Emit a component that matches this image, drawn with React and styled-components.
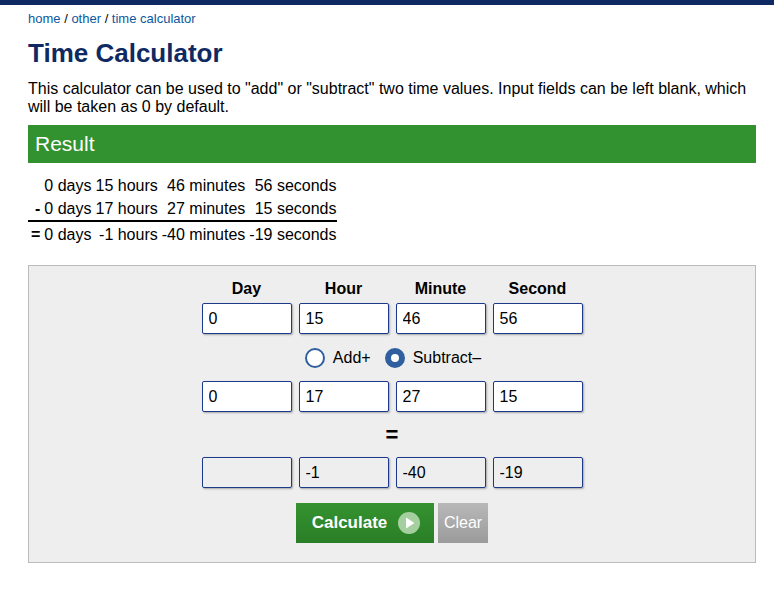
import React from "react";
import styled, { createGlobalStyle } from "styled-components";

const Global = createGlobalStyle`
  html, body { margin: 0; padding: 0; background: #fff; }
  body { font-family: "Liberation Sans", Arial, sans-serif; color: #000; }
`;

const TopBar = styled.div`
  height: 5px;
  background: #0f2a62;
`;

const Page = styled.div`
  padding: 0 18px 0 28px;
`;

const Crumbs = styled.div`
  font-size: 13px;
  line-height: 16px;
  padding-top: 6px;
  color: #000;
  a { color: #0a58a0; text-decoration: none; }
`;

const Title = styled.h1`
  margin: 0;
  padding-top: 11px;
  font-size: 26px;
  line-height: 30px;
  font-weight: bold;
  color: #0f2a62;
`;

const Intro = styled.p`
  margin: 0;
  padding-top: 12px;
  font-size: 16px;
  line-height: 18px;
`;

const ResultBar = styled.div`
  margin-top: 9px;
  height: 38px;
  background: #32922f;
  color: #fff;
  font-size: 21px;
  line-height: 38px;
  padding-left: 7px;
`;

const ResultTable = styled.table`
  margin-top: 12px;
  border-collapse: collapse;
  font-size: 16px;
  td {
    text-align: right;
    padding: 0 0 0 4px;
    white-space: nowrap;
  }
`;

const Row = styled.tr`
  height: ${(p) => p.$h}px;
  td {
    border-bottom: ${(p) => (p.$line ? "2px solid #000" : "none")};
    vertical-align: middle;
  }
`;

const Sign = styled.td`
  font-weight: bold;
  && { padding-left: 3px; }
`;

const Panel = styled.div`
  margin-top: 18px;
  width: 726px;
  background: #eeeeee;
  border: 1px solid #bbbbbb;
  display: flex;
  flex-direction: column;
  align-items: center;
  padding: 12px 0 19px;
`;

const Grid = styled.div`
  display: grid;
  grid-template-columns: repeat(4, 90px);
  column-gap: 7px;
`;

const Head = styled.div`
  font-weight: bold;
  font-size: 16px;
  text-align: center;
  line-height: 22px;
  padding-bottom: 3px;
`;

const Field = styled.input`
  box-sizing: border-box;
  width: 90px;
  height: 31px;
  border: 1px solid #1d3a8a;
  border-radius: 2px;
  box-shadow: 1px 1px 2px rgba(0, 0, 0, 0.3);
  background: ${(p) => (p.readOnly ? "#eeeeee" : "#fff")};
  font-family: "Liberation Sans", Arial, sans-serif;
  font-size: 16px;
  padding: 0 0 0 6px;
  color: #000;
  outline: none;
`;

const Radios = styled.div`
  display: flex;
  align-items: center;
  height: 24px;
  margin: 12px 0 11px 16px;
  font-size: 16px;
`;

const RadioItem = styled.label`
  display: flex;
  align-items: center;
  margin-right: 14px;
`;

const Dot = styled.span`
  box-sizing: border-box;
  width: 20px;
  height: 20px;
  border-radius: 50%;
  border: ${(p) => (p.$on ? "6px solid #2f5f9e" : "2px solid #2f5f9e")};
  background: #fff;
  margin-right: 8px;
`;

const Equals = styled.div`
  font-weight: bold;
  font-size: 22px;
  line-height: 24px;
  height: 44px;
  padding-top: 1px;
  display: flex;
  align-items: center;
  justify-content: center;
`;

const Buttons = styled.div`
  display: flex;
  gap: 4px;
  margin-top: 15px;
`;

const CalcButton = styled.button`
  height: 40px;
  width: 138px;
  border: none;
  background: linear-gradient(#35922f, #2a7e27);
  color: #fff;
  font-family: "Liberation Sans", Arial, sans-serif;
  font-weight: bold;
  font-size: 17px;
  display: flex;
  align-items: center;
  justify-content: center;
  gap: 11px;
  padding: 0 0 0 2px;
`;

const ClearButton = styled.button`
  height: 40px;
  width: 50px;
  border: none;
  background: linear-gradient(#b8b8b8, #9b9b9b);
  color: #fff;
  font-family: "Liberation Sans", Arial, sans-serif;
  font-size: 16px;
  padding: 0;
`;

const PlayIcon = () => (
  <svg width="22" height="22" viewBox="0 0 22 22">
    <circle cx="11" cy="11" r="11" fill="#a6cf9f" />
    <path d="M8 5.5 L16.5 11 L8 16.5 Z" fill="#fff" />
  </svg>
);

export default function App() {
  const top = ["0", "15", "46", "56"];
  const mid = ["0", "17", "27", "15"];
  const res = ["", "-1", "-40", "-19"];
  return (
    <>
      <Global />
      <TopBar />
      <Page>
        <Crumbs>
          <a href="#">home</a> / <a href="#">other</a> / <a href="#">time calculator</a>
        </Crumbs>
        <Title>Time Calculator</Title>
        <Intro>
          This calculator can be used to "add" or "subtract" two time values. Input fields can be left blank, which will be taken as 0 by default.
        </Intro>
        <ResultBar>Result</ResultBar>
        <ResultTable>
          <tbody>
            <Row $h={22}>
              <Sign></Sign>
              <td>0 days</td>
              <td>15 hours</td>
              <td>46 minutes</td>
              <td>56 seconds</td>
            </Row>
            <Row $h={24} $line>
              <Sign>-</Sign>
              <td>0 days</td>
              <td>17 hours</td>
              <td>27 minutes</td>
              <td>15 seconds</td>
            </Row>
            <Row $h={26}>
              <Sign>=</Sign>
              <td>0 days</td>
              <td>-1 hours</td>
              <td>-40 minutes</td>
              <td>-19 seconds</td>
            </Row>
          </tbody>
        </ResultTable>
        <Panel>
          <Grid>
            {["Day", "Hour", "Minute", "Second"].map((h) => (
              <Head key={h}>{h}</Head>
            ))}
            {top.map((v, i) => (
              <Field key={"t" + i} defaultValue={v} />
            ))}
          </Grid>
          <Radios>
            <RadioItem>
              <Dot />
              Add+
            </RadioItem>
            <RadioItem>
              <Dot $on />
              Subtract–
            </RadioItem>
          </Radios>
          <Grid>
            {mid.map((v, i) => (
              <Field key={"m" + i} defaultValue={v} />
            ))}
          </Grid>
          <Equals>=</Equals>
          <Grid>
            {res.map((v, i) => (
              <Field key={"r" + i} defaultValue={v} readOnly />
            ))}
          </Grid>
          <Buttons>
            <CalcButton>
              Calculate <PlayIcon />
            </CalcButton>
            <ClearButton>Clear</ClearButton>
          </Buttons>
        </Panel>
      </Page>
    </>
  );
}
